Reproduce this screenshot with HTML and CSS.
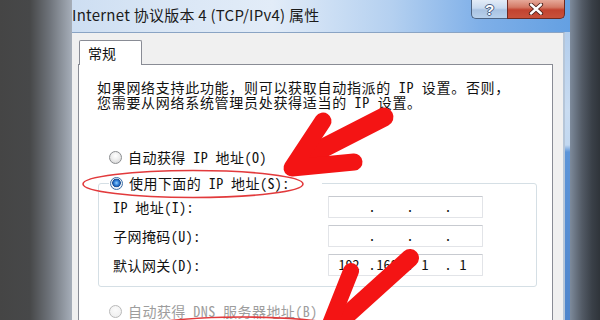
FILE: index.html
```html
<!DOCTYPE html>
<html lang="zh-CN">
<head>
<meta charset="utf-8">
<title>Internet 协议版本 4 (TCP/IPv4) 属性</title>
<link rel="stylesheet" href="styles.css">
</head>
<body>
<div class="screen">
  <div class="desk-left"></div>
  <div class="window">
    <div class="titlebar">
      <span class="title">Internet 协议版本 4 (TCP/IPv4) 属性</span>
      <div class="caption-btns">
        <div class="btn-help"><span>?</span></div>
        <div class="btn-close">
          <svg width="16" height="12" viewBox="0 0 16 12"><path d="M3 1.5 L13 10.5 M13 1.5 L3 10.5" stroke="#4a1e17" stroke-width="4.2" stroke-linecap="round"/><path d="M3 1.5 L13 10.5 M13 1.5 L3 10.5" stroke="#ffffff" stroke-width="2.4" stroke-linecap="round"/></svg>
        </div>
      </div>
    </div>
    <div class="client">
      <div class="tabs"><div class="tab">常规</div></div>
      <div class="panel">
        <p class="intro"><span class="line">如果网络支持此功能，则可以获取自动指派的 IP 设置。否则，</span><span class="line">您需要从网络系统管理员处获得适当的 IP 设置。</span></p>
        <div class="radio-row"><span class="radio"></span><span>自动获得 IP 地址(O)</span></div>
        <fieldset class="group">
          <legend class="radio-row"><span class="radio checked"></span><span>使用下面的 IP 地址(S):</span></legend>
          <div class="field-row">
            <span class="label">IP 地址(I):</span>
            <div class="ipbox"><span class="seg"></span><span class="dot">.</span><span class="seg"></span><span class="dot">.</span><span class="seg"></span><span class="dot">.</span><span class="seg"></span></div>
          </div>
          <div class="field-row">
            <span class="label">子网掩码(U):</span>
            <div class="ipbox"><span class="seg"></span><span class="dot">.</span><span class="seg"></span><span class="dot">.</span><span class="seg"></span><span class="dot">.</span><span class="seg"></span></div>
          </div>
          <div class="field-row">
            <span class="label">默认网关(D):</span>
            <div class="ipbox"><span class="seg">192</span><span class="dot">.</span><span class="seg">168</span><span class="dot">.</span><span class="seg">1</span><span class="dot">.</span><span class="seg">1</span></div>
          </div>
        </fieldset>
        <div class="radio-row disabled dns"><span class="radio"></span><span>自动获得 DNS 服务器地址(B)</span></div>
      </div>
    </div>
  </div>
  <div class="desk-right"></div>
  <svg class="annot" width="600" height="320" viewBox="0 0 600 320">
    <ellipse cx="193" cy="184" rx="110" ry="13.5" fill="none" stroke="#e23a3c" stroke-width="1.6"/>
    <ellipse cx="242" cy="335" rx="120" ry="18" fill="none" stroke="#e23a3c" stroke-width="1.6"/>
    <g fill="none" stroke="#f41414" stroke-linecap="round" stroke-linejoin="round">
      <path d="M384 117 L300 160" stroke-width="19"/>
      <path d="M323 121 L292 168 L354 162" stroke-width="17"/>
      <path d="M410 258 L326 334" stroke-width="18"/>
      <path d="M351 271 L326 334 L388 330" stroke-width="16"/>
    </g>
  </svg>
</div>
</body>
</html>
```
FILE: styles.css
```css
html, body {
  margin: 0;
  padding: 0;
}
body {
  width: 600px;
  height: 320px;
  overflow: hidden;
  background: #3a3f46;
}
.screen {
  position: relative;
  width: 600px;
  height: 320px;
  display: flex;
  overflow: hidden;
  font-family: "Noto Sans Mono CJK SC", "Noto Sans CJK SC", monospace;
  color: #111;
}
.desk-left {
  width: 72px;
  flex: none;
  background: linear-gradient(to right, #454545 0, #474849 30px, #6f747b 50px, #a6aeb9 72px);
}
.desk-right {
  width: 30px;
  flex: none;
  background: linear-gradient(to right, #7d8a9b 0, #535b66 12px, #3a4048 22px, #2f343a 30px);
}
.window {
  width: 498px;
  flex: none;
  display: flex;
  flex-direction: column;
  background: linear-gradient(to bottom, #a9c7ea 0, #c9dcf1 110px, #c2d8f0 145px, #5d95d8 152px, #4f86cc 320px);
}
.titlebar {
  height: 32px;
  flex: none;
  display: flex;
  align-items: flex-start;
  background: linear-gradient(to right, #cddef2 0, #d9e6f5 90px, #e2ecf8 200px, #b4d0f0 320px, #7eafe8 410px, #64a0e2 498px);
}
.title {
  font-family: "Noto Sans CJK SC", "Noto Sans", sans-serif;
  font-size: 15px;
  letter-spacing: 0.25px;
  line-height: 30px;
  color: #1b1b1b;
  white-space: nowrap;
}
.caption-btns {
  margin-left: auto;
  margin-right: 5px;
  display: flex;
}
.btn-help, .btn-close {
  height: 19px;
  display: flex;
  align-items: center;
  justify-content: center;
  box-sizing: border-box;
  border: 1px solid #4d6482;
  border-top: none;
}
.btn-help {
  width: 36px;
  border-radius: 0 0 0 5px;
  border-right: none;
  background: linear-gradient(to bottom, #e3ecf7 0, #c8daef 45%, #a9c3e2 55%, #b8d1ec 100%);
}
.btn-help span {
  font-family: "Liberation Sans", sans-serif;
  font-weight: bold;
  font-size: 15px;
  line-height: 15px;
  color: #fff;
  text-shadow: 0 0 1px #3b4f6b, 1px 0 0 #53678a, -1px 0 0 #53678a, 0 1px 0 #53678a, 0 -1px 0 #53678a;
}
.btn-close {
  width: 58px;
  border-radius: 0 0 5px 0;
  border-color: #6d2a22;
  background: linear-gradient(to bottom, #e6a999 0, #d47a66 40%, #c24330 55%, #c8513b 100%);
}
.client {
  flex: 1;
  margin-right: 5px;
  border-top: 1px solid #8aa4c4;
  border-right: 2px solid #b6c6d8;
  background: #f0f0f0;
  padding: 7px 10px 0 6px;
  display: flex;
  flex-direction: column;
}
.tabs {
  display: flex;
  padding-left: 1px;
  position: relative;
  z-index: 1;
  margin-bottom: -1px;
}
.tab {
  width: 63px;
  height: 25px;
  box-sizing: border-box;
  border: 1px solid #898c95;
  border-bottom: none;
  border-radius: 2px 2px 0 0;
  background: #fff;
  font-family: "Noto Sans CJK SC", sans-serif;
  font-size: 14px;
  line-height: 24px;
  padding-left: 8px;
}
.panel {
  flex: 1;
  background: #fff;
  border: 1px solid #898c95;
  padding: 15px 15px 0 18px;
  font-size: 14px;
  letter-spacing: 0.45px;
}
.intro {
  margin: 0;
  display: flex;
  flex-direction: column;
  letter-spacing: 0.7px;
}
.intro .line {
  display: block;
  height: 15px;
  line-height: 15px;
  white-space: nowrap;
}
.radio-row {
  display: flex;
  align-items: center;
  gap: 6px;
  height: 18px;
  white-space: nowrap;
  line-height: 18px;
}
.panel > .radio-row {
  margin-top: 38px;
  padding-left: 12px;
}
.panel > .radio-row.dns {
  margin-top: 15px;
}
.radio {
  width: 13px;
  height: 13px;
  box-sizing: border-box;
  border-radius: 50%;
  border: 1px solid #8b8d90;
  background: radial-gradient(circle at 50% 35%, #ffffff 0, #eeeeee 45%, #cfcfcf 100%);
  flex: none;
}
.radio.checked {
  border-color: #3c6fa8;
  background: radial-gradient(circle at 50% 45%, #8fd0ff 0, #2a7ad6 2.5px, #1b4f94 4px, #e9eef4 4.6px, #f6f8fb 100%);
}
.disabled {
  color: #9d9d9d;
}
.disabled .radio {
  border-color: #b9b9b9;
  background: radial-gradient(circle at 50% 35%, #fbfbfb 0, #ececec 100%);
}
.group {
  margin: 8px 0 0 1px;
  padding: 4px 0 10px 14px;
  border: 1px solid #d5dfe5;
  border-radius: 3px;
  min-width: 0;
}
.group legend {
  margin-left: -4px;
  padding: 0 32px 0 1px;
  background: #fff;
}
.field-row {
  display: flex;
  align-items: center;
  height: 22px;
}
.field-row + .field-row {
  margin-top: 7px;
}
.label {
  width: 215px;
  flex: none;
  white-space: nowrap;
}
.ipbox {
  width: 155px;
  height: 22px;
  box-sizing: border-box;
  border: 1px solid #e2e4e8;
  border-top-color: #c7cad0;
  border-radius: 1px;
  display: flex;
  align-items: flex-end;
  padding: 0 0 2px 9px;
  letter-spacing: 0;
  line-height: 18px;
}
.seg {
  width: 22px;
  text-align: center;
  margin-right: 8px;
}
.dot {
  width: 8px;
  text-align: center;
}
.annot {
  position: absolute;
  left: 0;
  top: 0;
  pointer-events: none;
}
```
